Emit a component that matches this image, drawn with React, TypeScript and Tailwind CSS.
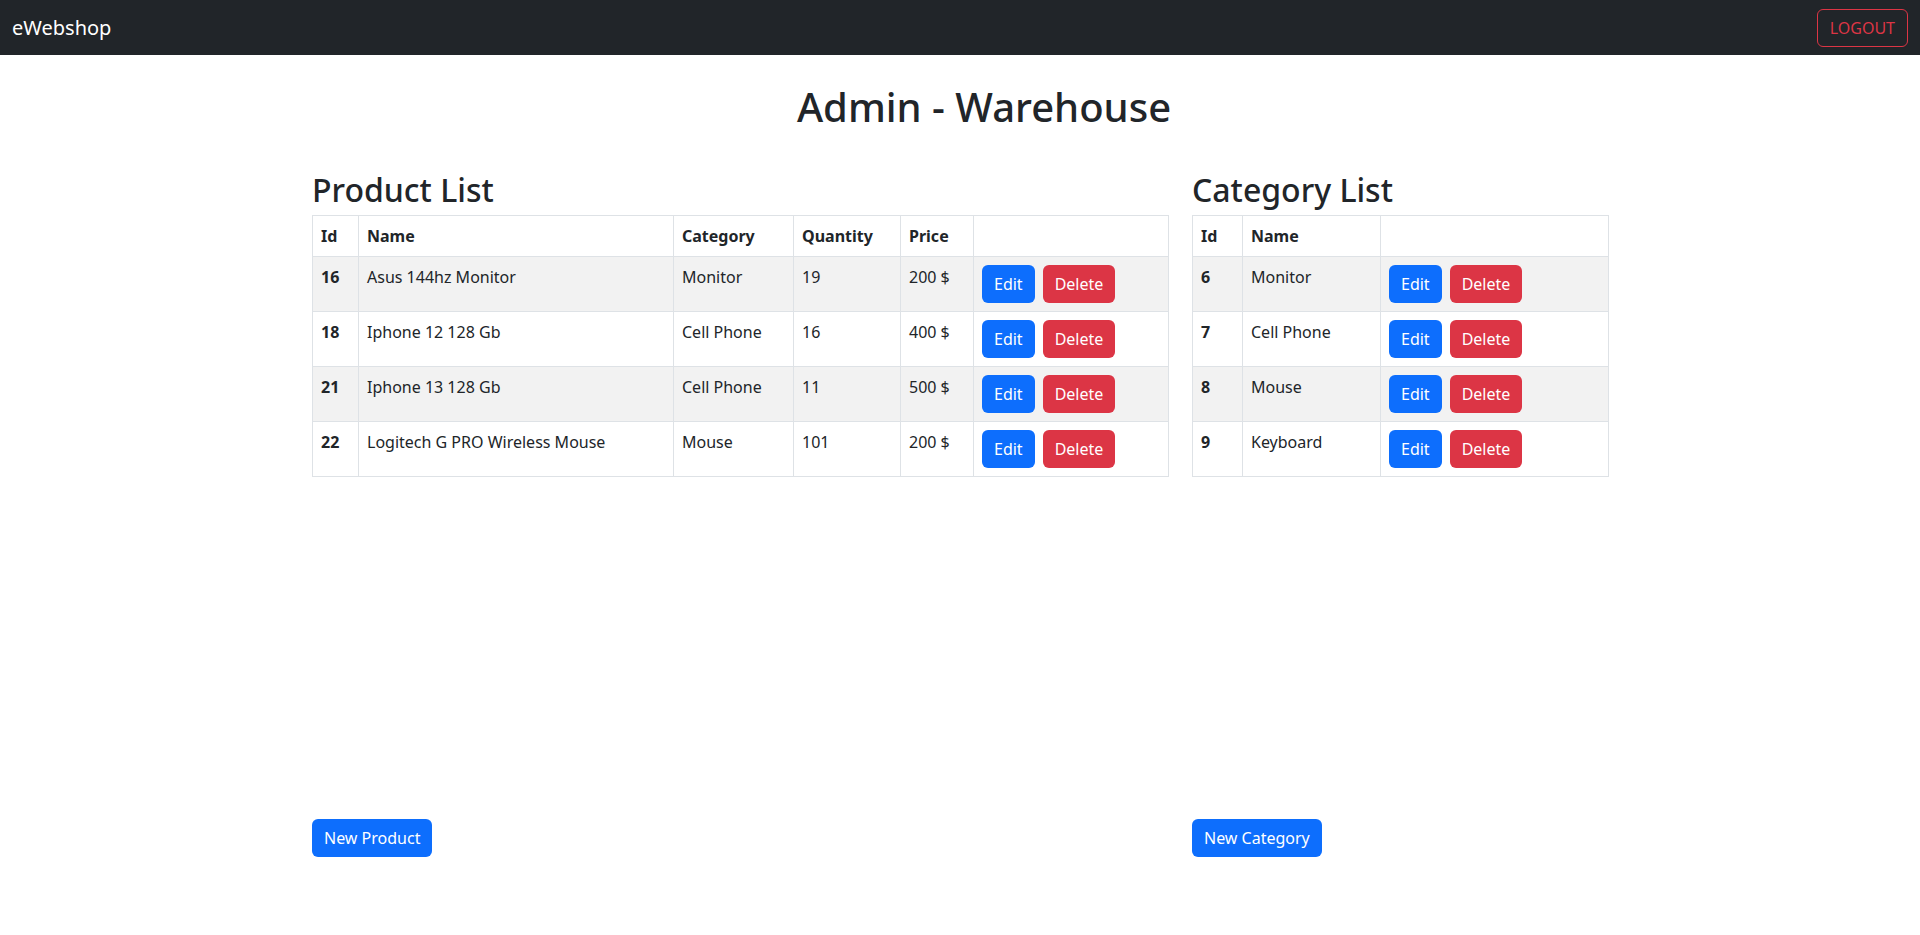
import React from "react";

const products = [
  { id: 16, name: "Asus 144hz Monitor", category: "Monitor", qty: 19, price: "200 $" },
  { id: 18, name: "Iphone 12 128 Gb", category: "Cell Phone", qty: 16, price: "400 $" },
  { id: 21, name: "Iphone 13 128 Gb", category: "Cell Phone", qty: 11, price: "500 $" },
  { id: 22, name: "Logitech G PRO Wireless Mouse", category: "Mouse", qty: 101, price: "200 $" },
];

const categories = [
  { id: 6, name: "Monitor" },
  { id: 7, name: "Cell Phone" },
  { id: 8, name: "Mouse" },
  { id: 9, name: "Keyboard" },
];

function Actions() {
  return (
    <div className="flex gap-2">
      <button className="h-[38px] px-3 rounded-[6px] bg-[#0d6efd] text-white text-[16px] leading-6">Edit</button>
      <button className="h-[38px] px-3 rounded-[6px] bg-[#dc3545] text-white text-[16px] leading-6">Delete</button>
    </div>
  );
}

const th = "border border-[#dee2e6] px-2 py-2 text-left font-bold leading-6 align-top";
const td = "border border-[#dee2e6] px-2 py-2 leading-6 align-top";

export default function App() {
  return (
    <div className="min-h-[935px] bg-white text-[#212529] text-[16px]" style={{ fontFamily: '"Segoe UI", "Noto Sans", sans-serif' }}>
      <nav className="h-[55px] bg-[#212529] flex items-center justify-between px-3">
        <span className="text-[20px] leading-[30px] text-white">eWebshop</span>
        <button className="h-[38px] px-3 border border-[#dc3545] rounded-[6px] text-[#dc3545] text-[16px] leading-6">LOGOUT</button>
      </nav>
      <div className="w-[1320px] mx-auto px-3 pt-[28px]">
        <h1 className="text-center text-[40px] leading-[48px] font-medium pl-[48px]">Admin - Warehouse</h1>
        <div className="flex gap-6 mt-[40px]">
          <div className="w-[856px] flex flex-col">
            <h2 className="text-[32px] leading-[38px] font-medium mb-[6px]">Product List</h2>
            <div className="h-[604px]">
              <table className="w-full table-fixed border-collapse">
                <colgroup>
                  <col className="w-[46px]" />
                  <col className="w-[315px]" />
                  <col className="w-[120px]" />
                  <col className="w-[107px]" />
                  <col className="w-[73px]" />
                  <col className="w-[195px]" />
                </colgroup>
                <thead>
                  <tr>
                    <th className={th}>Id</th>
                    <th className={th}>Name</th>
                    <th className={th}>Category</th>
                    <th className={th}>Quantity</th>
                    <th className={th}>Price</th>
                    <th className={th}></th>
                  </tr>
                </thead>
                <tbody>
                  {products.map((p, i) => (
                    <tr key={p.id} className={i % 2 === 0 ? "bg-[#f2f2f2]" : "bg-white"}>
                      <td className={td + " font-bold"}>{p.id}</td>
                      <td className={td}>{p.name}</td>
                      <td className={td}>{p.category}</td>
                      <td className={td}>{p.qty}</td>
                      <td className={td}>{p.price}</td>
                      <td className={td}><Actions /></td>
                    </tr>
                  ))}
                </tbody>
              </table>
            </div>
            <div>
              <button className="h-[38px] px-3 rounded-[6px] bg-[#0d6efd] text-white text-[16px] leading-6">New Product</button>
            </div>
          </div>
          <div className="w-[416px] flex flex-col">
            <h2 className="text-[32px] leading-[38px] font-medium mb-[6px]">Category List</h2>
            <div className="h-[604px]">
              <table className="w-full table-fixed border-collapse">
                <colgroup>
                  <col className="w-[50px]" />
                  <col className="w-[138px]" />
                  <col className="w-[228px]" />
                </colgroup>
                <thead>
                  <tr>
                    <th className={th}>Id</th>
                    <th className={th}>Name</th>
                    <th className={th}></th>
                  </tr>
                </thead>
                <tbody>
                  {categories.map((c, i) => (
                    <tr key={c.id} className={i % 2 === 0 ? "bg-[#f2f2f2]" : "bg-white"}>
                      <td className={td + " font-bold"}>{c.id}</td>
                      <td className={td}>{c.name}</td>
                      <td className={td}><Actions /></td>
                    </tr>
                  ))}
                </tbody>
              </table>
            </div>
            <div>
              <button className="h-[38px] px-3 rounded-[6px] bg-[#0d6efd] text-white text-[16px] leading-6">New Category</button>
            </div>
          </div>
        </div>
      </div>
    </div>
  );
}
